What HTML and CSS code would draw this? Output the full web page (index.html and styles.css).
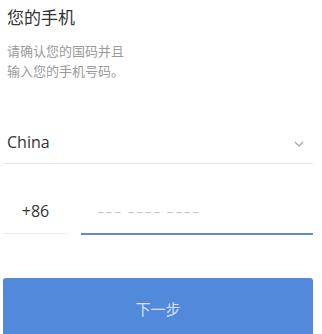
FILE: index.html
```
<!DOCTYPE html>
<html lang="zh">
<head>
    <meta charset="UTF-8">
    <meta name="viewport" content="width=device-width, initial-scale=1.0">
    <title>您的手机</title>
    <link rel="stylesheet" href="styles.css">
</head>
<body>
    <div class="page">
        <!-- Heading -->
        <div class="intro">
            <h1 class="title">您的手机</h1>
            <p class="hint">请确认您的国码并且<br>输入您的手机号码。</p>
        </div>

        <!-- Country select -->
        <div class="country-row">
            <span class="country-name">China</span>
            <svg class="chevron" width="10" height="6" viewBox="0 0 10 6">
                <path d="M1 1 L5 5 L9 1" fill="none" stroke="#a8a8a8" stroke-width="1.3"/>
            </svg>
        </div>

        <!-- Phone number -->
        <div class="phone-row">
            <div class="code">+86</div>
            <div class="number">
                <input type="text" placeholder="––– –––– ––––">
            </div>
        </div>

        <button class="next-btn">下一步</button>
    </div>
</body>
</html>
```
FILE: styles.css
```
body {
    margin: 0;
    padding: 0;
    background-color: #fff;
    font-family: "Open Sans", "Noto Sans CJK SC", sans-serif;
}
.page {
    width: 310px;
    margin-left: 3px;
}
.intro {
    padding: 5px 4px 0 4px;
}
.title {
    margin: 0;
    font-size: 17px;
    line-height: 24px;
    font-weight: 400;
    color: #333;
    font-family: "Noto Sans CJK SC", sans-serif;
}
.hint {
    margin: 12px 0 0 0;
    font-size: 13px;
    line-height: 20px;
    color: #9a9a9a;
    font-family: "Noto Sans CJK SC", sans-serif;
}
.country-row {
    display: flex;
    align-items: center;
    justify-content: space-between;
    margin-top: 50px;
    padding: 0 9px 10px 4px;
    height: 22px;
    border-bottom: 1px solid #e6e6e6;
}
.country-name {
    font-size: 16px;
    line-height: 22px;
    color: #333;
}
.chevron {
    margin-top: 3px;
}
.phone-row {
    display: flex;
    margin-top: 36px;
    gap: 13px;
}
.code {
    width: 65px;
    text-align: center;
    font-size: 16px;
    line-height: 22px;
    color: #333;
    padding-bottom: 11px;
    border-bottom: 1px solid #ececec;
}
.number {
    flex: 1;
    border-bottom: 2px solid #5f8ccc;
    margin-bottom: -1px;
}
.number input {
    border: none;
    outline: none;
    padding: 0 0 0 16px;
    width: 100%;
    box-sizing: border-box;
    font-family: "Open Sans", sans-serif;
    font-size: 14px;
    letter-spacing: 1.5px;
    line-height: 22px;
    height: 22px;
    background: transparent;
}
.number input::placeholder {
    color: #c8c8c8;
}
.next-btn {
    display: block;
    width: 100%;
    height: 60px;
    margin-top: 44px;
    border: none;
    border-radius: 3px;
    background-color: #5289db;
    color: #d6e4f8;
    font-size: 15px;
    font-family: "Noto Sans CJK SC", sans-serif;
}
```
